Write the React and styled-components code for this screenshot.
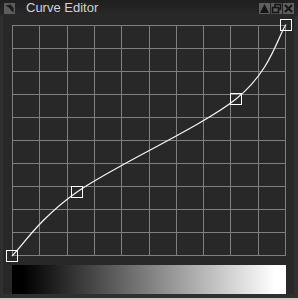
import React from "react";
import styled, { createGlobalStyle } from "styled-components";

const Global = createGlobalStyle`
  html, body { margin: 0; padding: 0; background: #d2cac4; }
  body { font-family: "Liberation Sans", Arial, sans-serif; }
`;

const Window = styled.div`
  width: 298px;
  height: 298px;
  box-sizing: border-box;
  background: #303030;
  display: flex;
  flex-direction: column;
  padding: 0 4px 4px 3px;
`;

const TitleBar = styled.div`
  height: 16px;
  margin: 0 -4px 0 -3px;
  padding: 0 4px 0 4px;
  background: linear-gradient(#1f1f1f, #292929);
  display: flex;
  align-items: center;
  gap: 0;
  flex-shrink: 0;
`;

const AppIcon = styled.div`
  width: 11px;
  height: 11px;
  background: #5c5c5c;
  display: flex;
  align-items: center;
  justify-content: center;
`;

const Title = styled.span`
  margin-left: 11px;
  font-size: 13px;
  color: #cdd3da;
  line-height: 16px;
  flex: 1;
`;

const Buttons = styled.div`
  display: flex;
  gap: 1px;
  margin-top: 1px;
`;

const WinButton = styled.div`
  width: 11px;
  height: 11px;
  background: #5f5f5f;
  display: flex;
  align-items: center;
  justify-content: center;
`;

const Panel = styled.div`
  flex: 1;
  background: #282828;
  padding: 9px 8px 0 9px;
  display: flex;
  flex-direction: column;
`;

const Graph = styled.svg`
  display: block;
  overflow: visible;
`;

const GradientBar = styled.div`
  margin-top: 9px;
  width: 274px;
  height: 29px;
  background: linear-gradient(to right, #000 4%, #fff 96%);
`;

const W = 273;
const H = 230;
const cols = 10;
const rows = 10;

const pts = [
  [0, 231],
  [65, 167],
  [224, 74],
  [274, -0.5],
];

function catmull(p) {
  const ext = [p[0], ...p, p[p.length - 1]];
  let d = `M${p[0][0]} ${p[0][1]}`;
  for (let i = 1; i < ext.length - 2; i++) {
    const p0 = ext[i - 1], p1 = ext[i], p2 = ext[i + 1], p3 = ext[i + 2];
    const c1 = [p1[0] + (p2[0] - p0[0]) / 6, p1[1] + (p2[1] - p0[1]) / 6];
    const c2 = [p2[0] - (p3[0] - p1[0]) / 6, p2[1] - (p3[1] - p1[1]) / 6];
    d += ` C${c1[0].toFixed(1)} ${c1[1].toFixed(1)} ${c2[0].toFixed(1)} ${c2[1].toFixed(1)} ${p2[0]} ${p2[1]}`;
  }
  return d;
}

export default function App() {
  const vLines = Array.from({ length: cols + 1 }, (_, i) => Math.round((i * W) / cols) + 0.5);
  const hLines = Array.from({ length: rows + 1 }, (_, j) => Math.round((j * H) / rows) + 0.5);
  return (
    <>
      <Global />
      <Window>
        <TitleBar>
          <AppIcon>
            <svg width="11" height="11" viewBox="0 0 11 11">
              <path d="M1.5 2.5 L6.5 1.5 L9.5 5 L9.5 9.5 L7.5 8 L5.5 5 Z" fill="#1b1b1b" />
            </svg>
          </AppIcon>
          <Title>Curve Editor</Title>
          <Buttons>
            <WinButton>
              <svg width="11" height="11" viewBox="0 0 11 11">
                <path d="M1 10 L5.5 1 L10 10 Z" fill="#151515" />
              </svg>
            </WinButton>
            <WinButton>
              <svg width="11" height="11" viewBox="0 0 11 11">
                <rect x="4" y="1.5" width="5.5" height="4.5" fill="none" stroke="#151515" strokeWidth="1.6" />
                <rect x="1.5" y="4.5" width="6" height="5" fill="#5f5f5f" stroke="#151515" strokeWidth="1.6" />
              </svg>
            </WinButton>
            <WinButton>
              <svg width="11" height="11" viewBox="0 0 11 11">
                <path d="M2 2 L9 9 M9 2 L2 9" stroke="#151515" strokeWidth="2" />
              </svg>
            </WinButton>
          </Buttons>
        </TitleBar>
        <Panel>
          <Graph width={W + 1} height={H + 1} viewBox={`0 0 ${W + 1} ${H + 1}`}>
            {vLines.map((x) => (
              <line key={"v" + x} x1={x} y1={0} x2={x} y2={H + 1} stroke="#7f7f7f" strokeWidth="1" />
            ))}
            {hLines.map((y) => (
              <line key={"h" + y} x1={0} y1={y} x2={W + 1} y2={y} stroke="#7f7f7f" strokeWidth="1" />
            ))}
            <path d={catmull(pts)} fill="none" stroke="#f2f2f2" strokeWidth="1.3" />
            {pts.map(([x, y], i) => (
              <rect
                key={i}
                x={Math.round(x) - 5.5}
                y={Math.round(y) - 5.5}
                width="11"
                height="11"
                fill="none"
                stroke="#ffffff"
                strokeWidth="1"
              />
            ))}
          </Graph>
          <GradientBar />
        </Panel>
      </Window>
    </>
  );
}
